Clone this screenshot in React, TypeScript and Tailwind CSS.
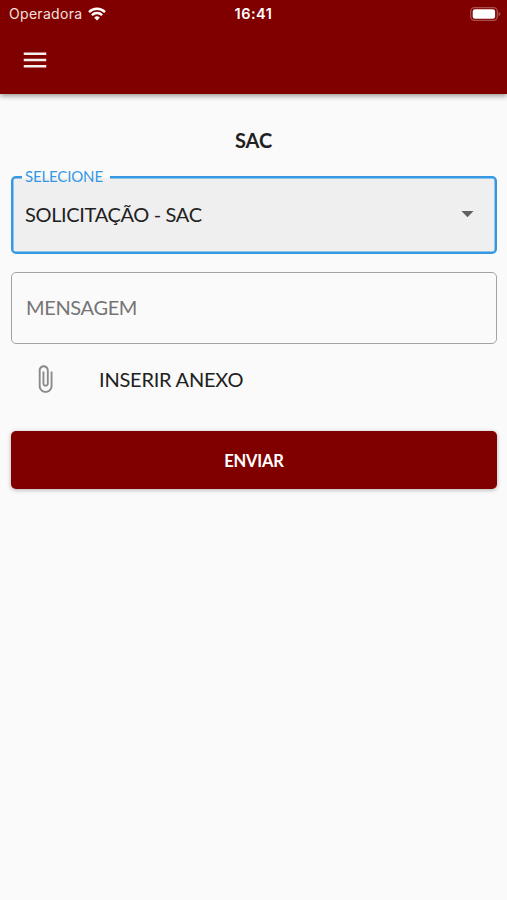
function StatusBar() {
  return (
    <div className="grid h-[27px] grid-cols-3 items-center pl-[9px] pr-[6px] font-[Inter,sans-serif] leading-none text-[#f3e0de]">
      <div className="flex items-center gap-[6px]">
        <span className="w-[73px] whitespace-nowrap pt-[1px] text-[14px] tracking-[0.3px]">Operadora</span>
        <svg width="18" height="14" viewBox="0 0 18 14" fill="none" stroke="#fff" strokeWidth="2.4" className="shrink-0">
          <path d="M1 5.1A11.4 11.4 0 0 1 17 5.1" />
          <path d="M3.9 8.1A7.2 7.2 0 0 1 14.1 8.1" />
          <path d="M6.2 10.7A4 4 0 0 1 11.8 10.7L9 13.6Z" fill="#fff" stroke="none" />
        </svg>
      </div>
      <span className="pr-[3px] pt-[1px] text-center text-[14.5px] font-semibold tracking-[0.5px] text-white">16:41</span>
      <div className="flex justify-end">
        <svg width="31" height="14" viewBox="0 0 31 14">
          <rect x="0.7" y="0.7" width="26.6" height="12.6" rx="3.8" fill="none" stroke="#a94f4d" strokeWidth="1.3" />
          <rect x="2.7" y="2.3" width="22.4" height="9.4" rx="2.3" fill="#fff" />
          <path d="M28.5 4.8C31 5.8 31 8.2 28.5 9.2Z" fill="#a94f4d" />
        </svg>
      </div>
    </div>
  );
}

export default function App() {
  return (
    <div className="min-h-[900px] w-full bg-[#fafafa] font-[Lato,sans-serif] text-[#212121]">
      <header className="h-[94px] bg-[#800000] shadow-[0_2px_5px_rgba(0,0,0,0.4)]">
        <StatusBar />
        <button aria-label="Menu" className="ml-[20px] mt-[18px] block">
          <svg width="30" height="30" viewBox="0 0 24 24" fill="#f8eeee">
            <path d="M3 18h18v-2H3v2zm0-5h18v-2H3v2zm0-7v2h18V6H3z" />
          </svg>
        </button>
      </header>
      <main className="flex flex-col pl-[11px] pr-[10px] pt-[33px]">
        <h1 className="h-[49px] pr-[1px] text-center text-[20px] font-bold leading-[26px] tracking-[-0.1px]">SAC</h1>
        <div className="relative flex h-[78px] items-center justify-between rounded-[5px] border-2 border-[#3498e4] bg-[#efefef] pb-[3px] pl-[12px] pr-[13px] shadow-[inset_0_0_0_0.5px_#3498e4]">
          <span className="absolute left-[9px] top-[-10px] h-[16px] w-[88px] bg-[linear-gradient(#fafafa_10px,#efefef_10px)] pl-[3px] text-[15px] leading-[16px] tracking-[-0.15px] text-[#3498e4]">
            SELECIONE
          </span>
          <span className="text-[20px] leading-[26px] tracking-[-0.35px]">SOLICITAÇÃO - SAC</span>
          <svg width="29" height="29" viewBox="0 0 24 24" fill="#616161">
            <path d="M7 10l5 5 5-5z" />
          </svg>
        </div>
        <div className="mt-[18px] flex h-[72px] items-center rounded-[5px] border border-[#a3a3a3] pb-[2px] pl-[14px] text-[20px] leading-[26px] tracking-[-0.35px] text-[#757575]">
          MENSAGEM
        </div>
        <div className="flex h-[69px] items-center gap-[39px] pl-[19px]">
          <svg width="30" height="30" viewBox="0 0 24 24" fill="#8a8a8a">
            <path d="M16.5 6v11.5c0 2.21-1.79 4-4 4s-4-1.79-4-4V5c0-1.38 1.12-2.5 2.5-2.5s2.5 1.12 2.5 2.5v10.5c0 .55-.45 1-1 1s-1-.45-1-1V6H10v9.5c0 1.38 1.12 2.5 2.5 2.5s2.5-1.12 2.5-2.5V5c0-2.21-1.79-4-4-4S7 2.79 7 5v12.5c0 3.04 2.46 5.5 5.5 5.5s5.5-2.46 5.5-5.5V6h-1.5z" />
          </svg>
          <span className="text-[20px] leading-[26px] tracking-[-0.22px]">INSERIR ANEXO</span>
        </div>
        <button className="mt-[18px] h-[58px] rounded-[5px] bg-[#800000] pt-[2px] text-[16.5px] font-bold tracking-[-0.2px] text-white shadow-[0_1px_4px_rgba(0,0,0,0.3)]">
          ENVIAR
        </button>
      </main>
    </div>
  );
}
